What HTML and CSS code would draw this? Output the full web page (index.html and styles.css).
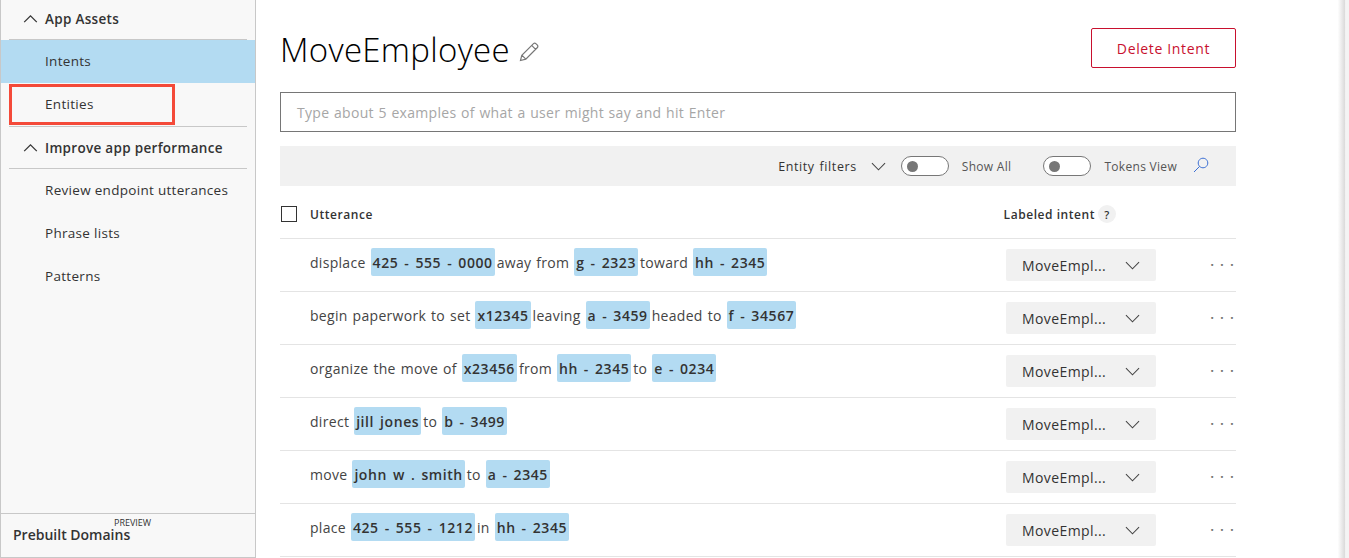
FILE: index.html
```html
<!DOCTYPE html>
<html lang="en">
<head>
    <meta charset="UTF-8">
    <title>MoveEmployee</title>
    <link rel="stylesheet" href="styles.css">
</head>
<body>
    <div class="page">
        <nav class="sidebar">
            <div class="nav-links">
                <div class="nav-heading">
                    <svg class="nav-caret" viewBox="0 0 16 10"><path d="M1 9 L8 2 L15 9"/></svg>
                    <span>App Assets</span>
                </div>
                <a class="nav-item nav-item-active">Intents</a>
                <a class="nav-item nav-item-marked">Entities</a>
                <div class="nav-heading">
                    <svg class="nav-caret" viewBox="0 0 16 10"><path d="M1 9 L8 2 L15 9"/></svg>
                    <span>Improve app performance</span>
                </div>
                <a class="nav-item">Review endpoint utterances</a>
                <a class="nav-item">Phrase lists</a>
                <a class="nav-item">Patterns</a>
            </div>
            <div class="nav-footer">
                <span class="preview-tag">PREVIEW</span>
                <span class="footer-label">Prebuilt Domains</span>
            </div>
        </nav>

        <main class="content">
            <header class="title-row">
                <h1>MoveEmployee</h1>
                <svg class="edit-icon" viewBox="0 0 20 20">
                    <path d="M1.5 18.5 L2.8 13.2 L14.5 1.6 Q15.6 .7 16.8 1.6 L18.4 3.2 Q19.3 4.4 18.4 5.5 L6.8 17.2 Z M2.8 13.2 L6.8 17.2 M12.7 3.4 L16.6 7.3"/>
                </svg>
                <button class="delete-btn">Delete Intent</button>
            </header>

            <div class="example-input">Type about 5 examples of what a user might say and hit Enter</div>

            <div class="filter-bar">
                <span class="filter-label">Entity filters</span>
                <svg class="chevron filter-chevron" viewBox="0 0 16 9"><path d="M1 1 L8 8 L15 1"/></svg>
                <span class="toggle"><i></i></span>
                <span class="toggle-label">Show All</span>
                <span class="toggle toggle-second"><i></i></span>
                <span class="toggle-label">Tokens View</span>
                <svg class="search-icon" viewBox="0 0 16 16"><path d="M10 1.2 a4.8 4.8 0 1 1 -.01 0 Z M6.6 9.4 L1 15"/></svg>
            </div>

            <div class="table-head">
                <span class="checkbox"></span>
                <span class="head-utterance">Utterance</span>
                <span class="head-intent">Labeled intent</span>
                <span class="help-badge">?</span>
            </div>

            <div class="row">
                <div class="utterance">displace <b>425 - 555 - 0000</b>away from <b>g - 2323</b>toward <b>hh - 2345</b></div>
                <div class="intent-select"><span>MoveEmpl...</span><svg class="chevron" viewBox="0 0 16 9"><path d="M1 1 L8 8 L15 1"/></svg></div>
                <div class="more">&middot;&middot;&middot;</div>
            </div>
            <div class="row">
                <div class="utterance">begin paperwork to set <b>x12345</b>leaving <b>a - 3459</b>headed to <b>f - 34567</b></div>
                <div class="intent-select"><span>MoveEmpl...</span><svg class="chevron" viewBox="0 0 16 9"><path d="M1 1 L8 8 L15 1"/></svg></div>
                <div class="more">&middot;&middot;&middot;</div>
            </div>
            <div class="row">
                <div class="utterance">organize the move of <b>x23456</b>from <b>hh - 2345</b>to <b>e - 0234</b></div>
                <div class="intent-select"><span>MoveEmpl...</span><svg class="chevron" viewBox="0 0 16 9"><path d="M1 1 L8 8 L15 1"/></svg></div>
                <div class="more">&middot;&middot;&middot;</div>
            </div>
            <div class="row">
                <div class="utterance">direct <b>jill jones</b>to <b>b - 3499</b></div>
                <div class="intent-select"><span>MoveEmpl...</span><svg class="chevron" viewBox="0 0 16 9"><path d="M1 1 L8 8 L15 1"/></svg></div>
                <div class="more">&middot;&middot;&middot;</div>
            </div>
            <div class="row">
                <div class="utterance">move <b>john w . smith</b>to <b>a - 2345</b></div>
                <div class="intent-select"><span>MoveEmpl...</span><svg class="chevron" viewBox="0 0 16 9"><path d="M1 1 L8 8 L15 1"/></svg></div>
                <div class="more">&middot;&middot;&middot;</div>
            </div>
            <div class="row">
                <div class="utterance">place <b>425 - 555 - 1212</b>in <b>hh - 2345</b></div>
                <div class="intent-select"><span>MoveEmpl...</span><svg class="chevron" viewBox="0 0 16 9"><path d="M1 1 L8 8 L15 1"/></svg></div>
                <div class="more">&middot;&middot;&middot;</div>
            </div>
        </main>

        <div class="edge"></div>
    </div>
</body>
</html>
```

FILE: styles.css
```css
* {
    box-sizing: border-box;
}
html, body {
    margin: 0;
    height: 100%;
    overflow: hidden;
}
body {
    font-family: "Open Sans", "Noto Sans", sans-serif;
    font-size: 14px;
    color: #333;
    background: #fff;
}
.page {
    display: flex;
    height: 558px;
}

/* sidebar */
.sidebar {
    width: 256px;
    flex: none;
    display: flex;
    flex-direction: column;
    background: #f8f8f8;
    border-left: 1px solid #c8c8c8;
    border-right: 1px solid #c8c8c8;
    border-bottom: 1px solid #c8c8c8;
}
.nav-links {
    flex: 1;
}
.nav-heading {
    display: flex;
    align-items: center;
    height: 40px;
    margin: 0 8px;
    padding-left: 14px;
    gap: 7px;
    font-weight: 600;
    font-size: 13.5px;
    letter-spacing: .3px;
    border-bottom: 1px solid #c8c8c8;
}
.nav-heading:first-child {
    padding-bottom: 2px;
}
.nav-heading:nth-child(4) {
    height: 42px;
}
.nav-caret {
    width: 15px;
    height: 9px;
    fill: none;
    stroke: #333;
    stroke-width: 1.4;
}
.nav-item {
    display: flex;
    align-items: center;
    height: 43px;
    padding-left: 44px;
    padding-bottom: 2px;
    font-size: 13.5px;
    letter-spacing: .3px;
}
.nav-item-active {
    background: #b3dbf2;
}
.nav-item-marked {
    position: relative;
    height: 44px;
    margin: 0 8px;
    padding-left: 36px;
    border-bottom: 1px solid #c8c8c8;
}
.nav-item-marked::after {
    content: "";
    box-sizing: border-box;
    position: absolute;
    left: 0;
    top: 1px;
    width: 166px;
    height: 41px;
    border: 3px solid #f44a39;
}
.nav-footer {
    position: relative;
    height: 44px;
    padding: 13px 0 0 12px;
    border-top: 1px solid #c8c8c8;
}
.footer-label {
    display: block;
    font-size: 14px;
    line-height: 16px;
    font-weight: 600;
}
.preview-tag {
    position: absolute;
    left: 113px;
    top: 4px;
    font-size: 9px;
    line-height: 9px;
}

/* main column */
.content {
    width: 980px;
    flex: none;
    padding: 0 0 0 24px;
}
.title-row {
    display: flex;
    align-items: center;
    height: 92px;
    padding-top: 4px;
}
h1 {
    margin: 2px 0 0;
    font-size: 33px;
    font-weight: 300;
    letter-spacing: .3px;
    color: #000;
}
.edit-icon {
    width: 20px;
    height: 20px;
    margin: 8px 0 0 9px;
    fill: none;
    stroke: #777;
    stroke-width: 1.2;
}
.delete-btn {
    margin-left: auto;
    width: 145px;
    height: 40px;
    font: 500 14px "Open Sans", sans-serif;
    letter-spacing: .65px;
    color: #c8102e;
    background: #fff;
    border: 1px solid #c8102e;
    border-radius: 2px;
}
.example-input {
    height: 40px;
    padding: 0 16px;
    line-height: 40px;
    letter-spacing: .3px;
    word-spacing: .7px;
    color: #a6a6a6;
    border: 1px solid #767676;
}
.filter-bar {
    display: flex;
    align-items: center;
    height: 40px;
    margin-top: 14px;
    padding-right: 27px;
    justify-content: flex-end;
    background: #f1f1f1;
    font-size: 12px;
}
.filter-label {
    font-size: 12.5px;
    letter-spacing: .6px;
    word-spacing: 1px;
}
.chevron {
    width: 15px;
    height: 9px;
    fill: none;
    stroke: #444;
    stroke-width: 1.1;
}
.filter-chevron {
    margin: 0 15px 0 14px;
}
.toggle {
    display: inline-flex;
    align-items: center;
    width: 48px;
    height: 20px;
    padding-left: 5px;
    background: #fff;
    border: 1px solid #777;
    border-radius: 10px;
    margin-right: 13px;
}
.toggle i {
    width: 11px;
    height: 11px;
    background: #777;
    border-radius: 50%;
}
.toggle-second {
    margin-left: 32px;
}
.toggle-label {
    color: #555;
    letter-spacing: .3px;
}
.search-icon {
    width: 16px;
    height: 16px;
    margin: -3px 0 0 16px;
    fill: none;
    stroke: #3b6fd4;
    stroke-width: 1;
}

/* table */
.table-head {
    display: flex;
    align-items: center;
    height: 53px;
    padding: 4px 0 0 1px;
    border-bottom: 1px solid #e4e4e4;
    font-size: 12px;
    font-weight: 600;
    letter-spacing: .55px;
}
.checkbox {
    width: 16px;
    height: 16px;
    border: 1px solid #333;
}
.head-utterance {
    margin-left: 13px;
}
.head-intent {
    margin-left: auto;
}
.help-badge {
    display: flex;
    align-items: center;
    justify-content: center;
    width: 18px;
    height: 18px;
    margin: 0 120px 0 3px;
    background: #f1f1f1;
    border-radius: 50%;
    font-size: 11px;
}
.row {
    display: flex;
    align-items: center;
    height: 53px;
    border-bottom: 1px solid #e4e4e4;
}
.utterance {
    flex: 1;
    margin-bottom: 6px;
    padding-left: 30px;
    letter-spacing: .3px;
    word-spacing: 1px;
    color: #444;
}
.utterance b {
    display: inline-block;
    height: 28px;
    padding: 1px 2px 0;
    line-height: 27px;
    margin-right: 2px;
    background: #b3dbf2;
    border-radius: 2px;
    font-weight: 600;
    letter-spacing: .58px;
    word-spacing: 1.8px;
    color: #333;
}
.intent-select {
    display: flex;
    align-items: center;
    justify-content: space-between;
    width: 150px;
    height: 32px;
    padding: 0 16px;
    background: #f1f1f1;
    border-radius: 2px;
    letter-spacing: .4px;
}
.more {
    width: 84px;
    margin-right: -4px;
    text-align: right;
    font-size: 14px;
    font-weight: 600;
    letter-spacing: 6.1px;
    color: #777;
    line-height: 1;
}

.edge {
    flex: 1;
    background: linear-gradient(to right, #fff 90%, #dcdcdc 96%, #f4f4f4 97%);
}
```
